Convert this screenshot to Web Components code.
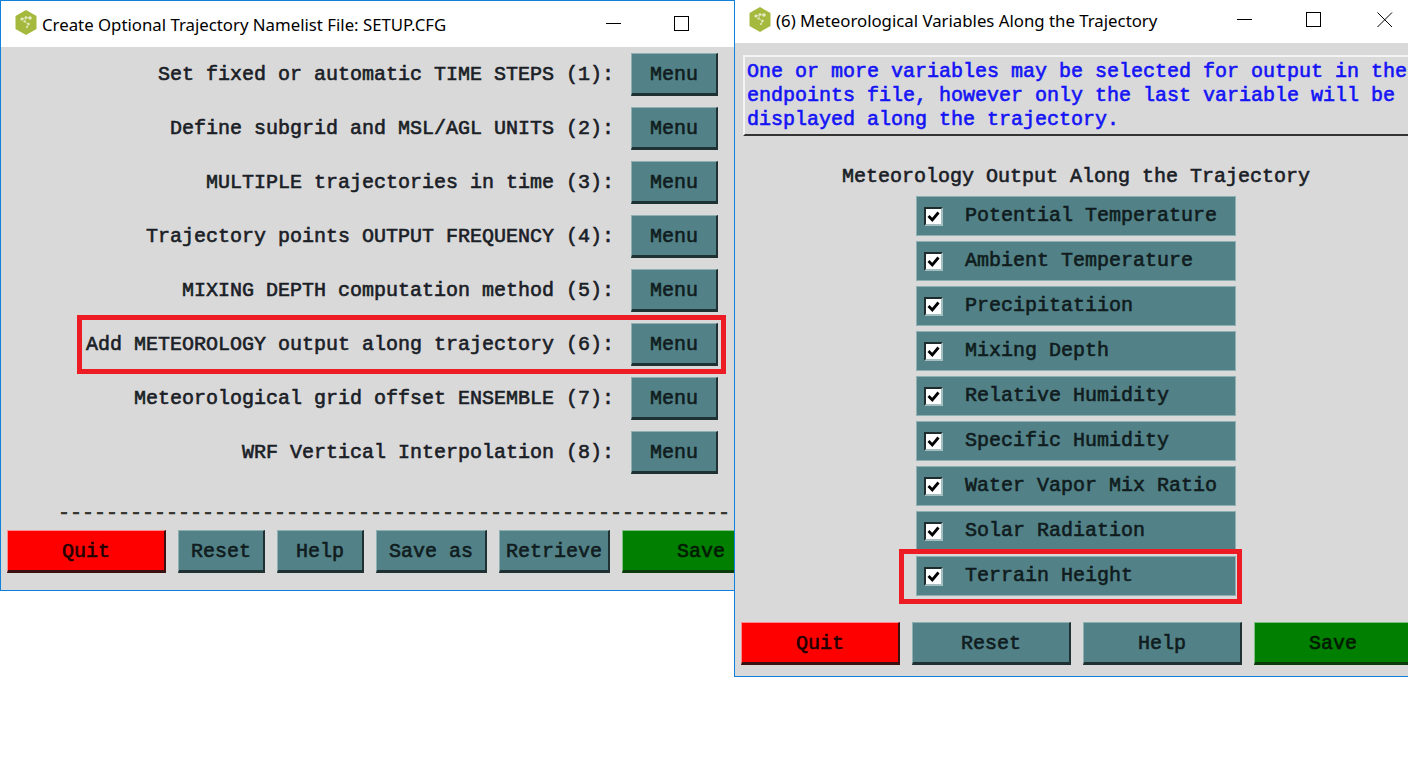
<!DOCTYPE html>
<html lang="en"><head><meta charset="utf-8"><title>Trajectory</title>
<style>
html,body{margin:0;padding:0;background:#fff;overflow:hidden;width:1408px;height:758px}
</style></head><body>
<tk-desktop>
  <tk-window style="--x:0px;--w:735px;--h:591px;--tb:47px;--top:1px;--title-gap:5px;--pad:14px;--bar-pb:0px;--icon-mb:4px" title-text="Create Optional Trajectory Namelist File: SETUP.CFG" buttons="min max">
    <tk-main-form></tk-main-form>
  </tk-window>
  <tk-window style="--x:734px;--w:684px;--h:677px;--tb:43px;--top:0px;--title-gap:5px;--pad:14px;--bar-pb:2px;--icon-mb:3px;--z:2" title-text="(6) Meteorological Variables Along the Trajectory" buttons="min max close">
    <tk-met-form></tk-met-form>
  </tk-window>
</tk-desktop>
<template id="t-desktop"><style>:host{display:block;position:relative;width:1408px;height:758px;overflow:hidden;background:#fff}</style><slot></slot></template>
<template id="t-window"><style>
:host{display:flex;flex-direction:column;position:absolute;left:var(--x);top:0;width:var(--w);height:var(--h);box-sizing:border-box;border:1px solid #0f80dc;border-top-width:var(--top);border-right-width:1px;background:#d9d9d9;z-index:var(--z,1);overflow:hidden}
.bar{flex:none;box-sizing:border-box;height:calc(var(--tb) - var(--top));padding-bottom:var(--bar-pb);background:#fff;display:flex;align-items:center;padding-left:var(--pad);gap:var(--title-gap);position:relative;font:16.8px "Noto Sans",sans-serif;color:#000;white-space:nowrap}
svg.icon{width:22px;height:25px;flex:none;margin-bottom:var(--icon-mb)}
.ctrl{position:absolute;top:0;left:0}
.body{flex:1;position:relative;min-height:0}
</style><div class="bar"><svg class="icon" viewBox="0 0 22 25"><polygon points="11,0 21.5,6 21.5,19 11,25 .5,19 .5,6" fill="#a6b93f"/><g fill="#e4ebc4"><circle cx="7" cy="9" r="1.6"/><circle cx="11" cy="7.5" r="1.3"/><circle cx="15" cy="8" r="1.8"/><circle cx="9.5" cy="11.5" r="1.1"/><circle cx="13.5" cy="14" r="1.2"/><circle cx="12" cy="17" r="1"/></g><path d="M7 9l4-1.5 4 .5M11 8l-1.500 3.500 4 2.500-1.500 3" stroke="#e4ebc4" stroke-width=".7" fill="none"/></svg><span id="title"></span><span id="ctrls"></span></div><div class="body"><slot></slot></div></template>
<template id="t-btn"><style>
:host{display:inline-flex;flex:none;box-sizing:border-box;height:var(--bh,43px);width:var(--bw,87px);padding-top:2px;align-items:center;justify-content:center;background:#528287;color:#101c1e;border-style:solid;border-width:1px 2px 3px 1px;border-color:#8fb0b3 #1f3133 #1f3133 #8fb0b3;font:20px/1 "Liberation Mono",monospace;-webkit-text-stroke:.6px currentColor;white-space:pre}
:host([kind=quit]){background:#f00;border-color:#ff8c8c #3a1010 #3a1010 #ff8c8c;color:#200}
:host([kind=save]){background:#007f00;border-color:#7fbf7f #0b3a0b #0b3a0b #7fbf7f;color:#031a03}
</style><slot></slot></template>
<template id="t-row"><style>
:host{display:flex;align-items:center;justify-content:flex-end;gap:17px;height:43px;font:20px/1 "Liberation Mono",monospace;-webkit-text-stroke:.6px currentColor;color:#1a2026;white-space:pre}
</style><span><slot></slot></span><tk-btn>Menu</tk-btn></template>
<template id="t-check"><style>
:host{display:flex;align-items:center;box-sizing:border-box;width:320px;height:40px;background:#528287;border:1px solid #8fb0b3;padding-left:7px;gap:22px;font:20px/1 "Liberation Mono",monospace;-webkit-text-stroke:.6px currentColor;color:#101c1e;white-space:pre}
.box{width:19px;height:19px;flex:none;box-sizing:border-box;background:#fff;border-style:solid;border-width:2px;border-color:#1e2c2e #a5bfc1 #a5bfc1 #1e2c2e;display:flex;-webkit-text-stroke:0}
svg{width:15px;height:15px}
</style><span class="box"><svg viewBox="0 0 15 15"><path d="M2.500 7L6.300 11L12.500 3.500" fill="none" stroke="#000" stroke-width="2.800"/></svg></span><span><slot></slot></span></template>
<template id="t-main"><style>
:host{display:flex;flex-direction:column;height:100%;font:20px/1 "Liberation Mono",monospace;-webkit-text-stroke:.6px currentColor;position:relative}
.rows{display:flex;flex-direction:column;gap:11px;padding:6px 16px 0 0}
.sep{height:20px;margin-top:30px;padding-left:57px;color:#33302c;white-space:pre;line-height:20px}
.foot{display:flex;gap:12px;padding:6px 0 0 6px;--bh:43px}
.hl{position:absolute;left:76px;top:268px;width:649px;height:59px;box-sizing:border-box;border:5px solid #ed1c24}
</style><div class="rows">
<tk-row>Set fixed or automatic TIME STEPS (1):</tk-row>
<tk-row>Define subgrid and MSL/AGL UNITS (2):</tk-row>
<tk-row>MULTIPLE trajectories in time (3):</tk-row>
<tk-row>Trajectory points OUTPUT FREQUENCY (4):</tk-row>
<tk-row>MIXING DEPTH computation method (5):</tk-row>
<tk-row>Add METEOROLOGY output along trajectory (6):</tk-row>
<tk-row>Meteorological grid offset ENSEMBLE (7):</tk-row>
<tk-row>WRF Vertical Interpolation (8):</tk-row>
</div><div class="sep">--------------------------------------------------------</div>
<div class="foot"><tk-btn kind="quit" style="--bw:159px">Quit</tk-btn><tk-btn>Reset</tk-btn><tk-btn>Help</tk-btn><tk-btn style="--bw:111px">Save as</tk-btn><tk-btn style="--bw:111px">Retrieve</tk-btn><tk-btn kind="save" style="--bw:159px">Save</tk-btn></div>
<div class="hl"></div></template>
<template id="t-met"><style>
:host{display:flex;flex-direction:column;height:100%;font:20px/1 "Liberation Mono",monospace;-webkit-text-stroke:.6px currentColor;position:relative}
.msg{margin:12px 0 0 8px;height:81px;box-sizing:border-box;border-style:solid;border-width:2px;border-color:#f4f4f4 #f4f4f4 #333 #f4f4f4;padding:3px 2px;color:#1414f5;line-height:24px;white-space:pre}
.head{margin-top:29px;text-align:center;height:24px;line-height:24px;color:#1a2026;white-space:pre}
.list{margin-top:7px;display:flex;flex-direction:column;align-items:center;gap:5px}
.foot{display:flex;gap:12px;padding:26px 0 0 6px;--bw:159px}
.hl{position:absolute;left:164px;top:506px;width:343px;height:55px;box-sizing:border-box;border:5px solid #ed1c24}
</style><div class="msg">One or more variables may be selected for output in the
endpoints file, however only the last variable will be
displayed along the trajectory.</div>
<div class="head">Meteorology Output Along the Trajectory</div>
<div class="list">
<tk-check>Potential Temperature</tk-check><tk-check>Ambient Temperature</tk-check><tk-check>Precipitatiion</tk-check><tk-check>Mixing Depth</tk-check><tk-check>Relative Humidity</tk-check><tk-check>Specific Humidity</tk-check><tk-check>Water Vapor Mix Ratio</tk-check><tk-check>Solar Radiation</tk-check><tk-check>Terrain Height</tk-check>
</div>
<div class="foot"><tk-btn kind="quit">Quit</tk-btn><tk-btn>Reset</tk-btn><tk-btn>Help</tk-btn><tk-btn kind="save">Save</tk-btn></div>
<div class="hl"></div></template>
<script>
function reg(name,tid,init){customElements.define(name,class extends HTMLElement{constructor(){super();this.attachShadow({mode:'open'}).appendChild(document.getElementById(tid).content.cloneNode(true));}connectedCallback(){if(init)init.call(this)}})}
reg('tk-desktop','t-desktop');reg('tk-btn','t-btn');reg('tk-row','t-row');reg('tk-check','t-check');reg('tk-main-form','t-main');reg('tk-met-form','t-met');
reg('tk-window','t-window',function(){
 const s=this.shadowRoot;s.getElementById('title').textContent=this.getAttribute('title-text');
 const b=this.getAttribute('buttons').split(' ');
 const right=b.includes('close');
 const off=right?[502,571,642]:[605,673];
 const y=right?19:22;
 const icons={min:'<path d="M0 .5H15" stroke="#000" fill="none"/>',max:'<rect x=".5" y=".5" width="14" height="14" stroke="#000" fill="none"/>',close:'<path d="M.5 .5L15 15M15 .5L.5 15" stroke="#000" fill="none"/>'};
 s.getElementById('ctrls').innerHTML=b.map((n,i)=>{const t=n==='min'?y:y-7;return `<svg class="ctrl" style="left:${off[i]}px;top:${t}px" width="16" height="16" viewBox="0 0 16 16">${icons[n]}</svg>`}).join('');
});
</script>
</body></html>
